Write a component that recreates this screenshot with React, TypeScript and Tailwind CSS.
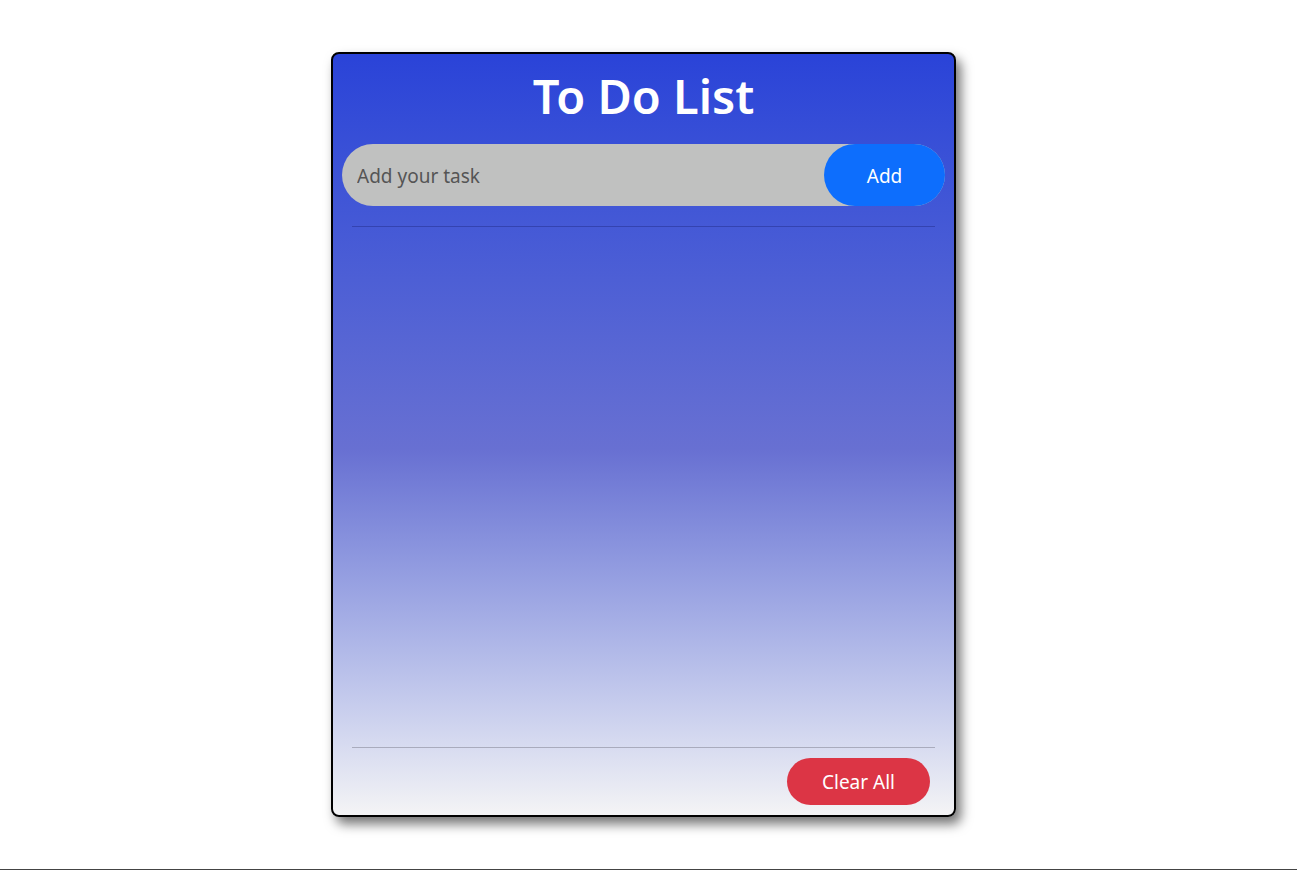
import React, { useState } from 'react';

export default function App() {
  const [task, setTask] = useState('');
  const [tasks, setTasks] = useState<string[]>([]);

  const addTask = () => {
    if (!task.trim()) return;
    setTasks((prev) => [...prev, task.trim()]);
    setTask('');
  };

  return (
    <div
      className="h-[870px] bg-white border-b border-[#444] flex justify-center pr-[10px]"
      style={{ fontFamily: '"Noto Sans", "Open Sans", sans-serif' }}
    >
      {/* Card */}
      <div className="mt-[52px] w-[625px] h-[765px] border-2 border-black rounded-lg shadow-[5px_7px_12px_rgba(0,0,0,0.55)] bg-gradient-to-b from-[#2a43d8] via-[#6870d2] via-52% to-[#f4f4f5] flex flex-col px-[9px]">

        <h1 className="text-center text-white font-semibold text-[47px] leading-none mt-[19px] h-[71px]">
          To Do List
        </h1>

        {/* Input row */}
        <div className="flex items-center h-[62px] rounded-full bg-[#c0c1c0]">
          <input
            value={task}
            onChange={(e) => setTask(e.target.value)}
            placeholder="Add your task"
            className="flex-1 bg-transparent outline-none pl-[15px] pt-[3px] text-[19px] text-[#333] placeholder:text-[#555]"
          />
          <button
            onClick={addTask}
            className="h-full w-[121px] rounded-full bg-[#0d6efd] text-white text-[19px] pt-[2px]"
          >
            Add
          </button>
        </div>

        {/* List */}
        <div className="mx-[10px] mt-[20px] flex-1 border-t border-[#2a3598]/60 border-b border-b-[#a9abbd]">
          {tasks.map((t, i) => (
            <p key={i} className="text-white py-2">{t}</p>
          ))}
        </div>

        {/* Footer */}
        <div className="flex justify-end pr-[15px] pt-[10px] pb-[10px]">
          <button
            onClick={() => setTasks([])}
            className="w-[143px] h-[47px] rounded-full bg-[#dc3545] text-white text-[19px] pt-[2px]"
          >
            Clear All
          </button>
        </div>

      </div>
    </div>
  );
}
